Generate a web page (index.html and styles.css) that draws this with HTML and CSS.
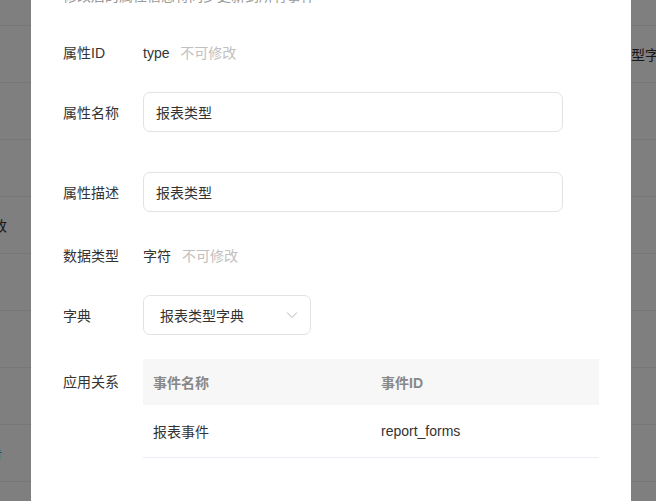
FILE: index.html
```html
<!DOCTYPE html>
<html lang="zh-CN">
<head>
    <meta charset="UTF-8">
    <meta name="viewport" content="width=device-width, initial-scale=1.0">
    <title>编辑属性</title>
    <link rel="stylesheet" href="styles.css">
</head>
<body>
    <!-- 背景页面 -->
    <div class="page">
        <div class="bg-row bg-row-first"></div>
        <div class="bg-row"><span class="bg-right">报表类型字典</span></div>
        <div class="bg-row"></div>
        <div class="bg-row"></div>
        <div class="bg-row"><span class="bg-left">修改</span></div>
        <div class="bg-row"></div>
        <div class="bg-row"></div>
        <div class="bg-row"></div>
        <div class="bg-row"><span class="bg-left bg-link">查看</span></div>
        <div class="bg-row"></div>
    </div>

    <div class="mask"></div>

    <!-- 编辑弹窗 -->
    <div class="dialog">
        <p class="hint">修改后的属性信息将同步更新到所有事件</p>

        <div class="form-item item-id">
            <label class="form-label">属性ID</label>
            <div class="form-value">
                <span class="text">type</span>
                <span class="readonly">不可修改</span>
            </div>
        </div>

        <div class="form-item item-name">
            <label class="form-label">属性名称</label>
            <div class="input">报表类型</div>
        </div>

        <div class="form-item item-desc">
            <label class="form-label">属性描述</label>
            <div class="input">报表类型</div>
        </div>

        <div class="form-item item-type">
            <label class="form-label">数据类型</label>
            <div class="form-value">
                <span class="text">字符</span>
                <span class="readonly">不可修改</span>
            </div>
        </div>

        <div class="form-item item-dict">
            <label class="form-label">字典</label>
            <div class="select">
                <span>报表类型字典</span>
                <svg class="arrow" width="12" height="8" viewBox="0 0 12 8">
                    <path d="M1 1.5 L6 6.5 L11 1.5" fill="none" stroke="#b4b4b4" stroke-width="1"/>
                </svg>
            </div>
        </div>

        <div class="form-item item-rel">
            <label class="form-label label-top">应用关系</label>
            <table class="rel-table">
                <thead>
                    <tr><th>事件名称</th><th>事件ID</th></tr>
                </thead>
                <tbody>
                    <tr><td>报表事件</td><td class="latin">report_forms</td></tr>
                </tbody>
            </table>
        </div>
    </div>
</body>
</html>
```

FILE: styles.css
```css
body {
    margin: 0;
    padding: 0;
    font-family: "Liberation Sans", "Noto Sans CJK SC", sans-serif;
    font-size: 14px;
    color: #333;
    background-color: #fff;
    overflow: hidden;
}

/* 背景页面 */
.page {
    height: 501px;
    overflow: hidden;
}

.bg-row {
    height: 56px;
    border-bottom: 1px solid #ebeef5;
    display: flex;
    align-items: center;
    position: relative;
}

.bg-row-first {
    height: 25px;
}

.bg-left {
    margin-left: -21px;
}

.bg-right {
    margin-left: 589px;
    white-space: nowrap;
}

.bg-link {
    color: #1a9aa6;
    margin-left: -26px;
}

.mask {
    position: fixed;
    left: 0;
    top: 0;
    right: 0;
    bottom: 0;
    background-color: rgba(0, 0, 0, 0.5);
}

/* 弹窗 */
.dialog {
    position: fixed;
    left: 31px;
    top: 0;
    width: 600px;
    height: 501px;
    background-color: #fff;
    padding-left: 32px;
    box-sizing: border-box;
    overflow: hidden;
}

.hint {
    margin: -14px 0 0 0;
    height: 20px;
    line-height: 20px;
    color: #999;
}

.form-item {
    display: flex;
    align-items: center;
}

.item-id { margin-top: 26px; height: 40px; }
.item-name { margin-top: 20px; }
.item-desc { margin-top: 40px; }
.item-type { margin-top: 23px; height: 40px; }
.item-dict { margin-top: 20px; }
.item-rel { margin-top: 24px; align-items: flex-start; }

.form-label {
    width: 80px;
    flex-shrink: 0;
    color: #333;
}

.label-top {
    line-height: 46px;
}

.form-value .readonly {
    color: #c0c0c0;
    margin-left: 7px;
}

.input {
    width: 420px;
    height: 40px;
    border: 1px solid #e2e2e2;
    border-radius: 7px;
    box-sizing: border-box;
    padding-left: 12px;
    display: flex;
    align-items: center;
}

.select {
    width: 168px;
    height: 40px;
    border: 1px solid #e2e2e2;
    border-radius: 7px;
    box-sizing: border-box;
    padding: 0 12px 0 16px;
    display: flex;
    align-items: center;
    justify-content: space-between;
}

.rel-table {
    width: 456px;
    border-collapse: collapse;
    table-layout: fixed;
}

.rel-table th {
    height: 46px;
    background-color: #f7f7f7;
    color: #888;
    font-weight: bold;
    text-align: left;
    padding: 0 10px;
}

.rel-table td {
    height: 52px;
    border-bottom: 1px solid #ebeef5;
    padding: 0 10px;
    color: #333;
}
```
